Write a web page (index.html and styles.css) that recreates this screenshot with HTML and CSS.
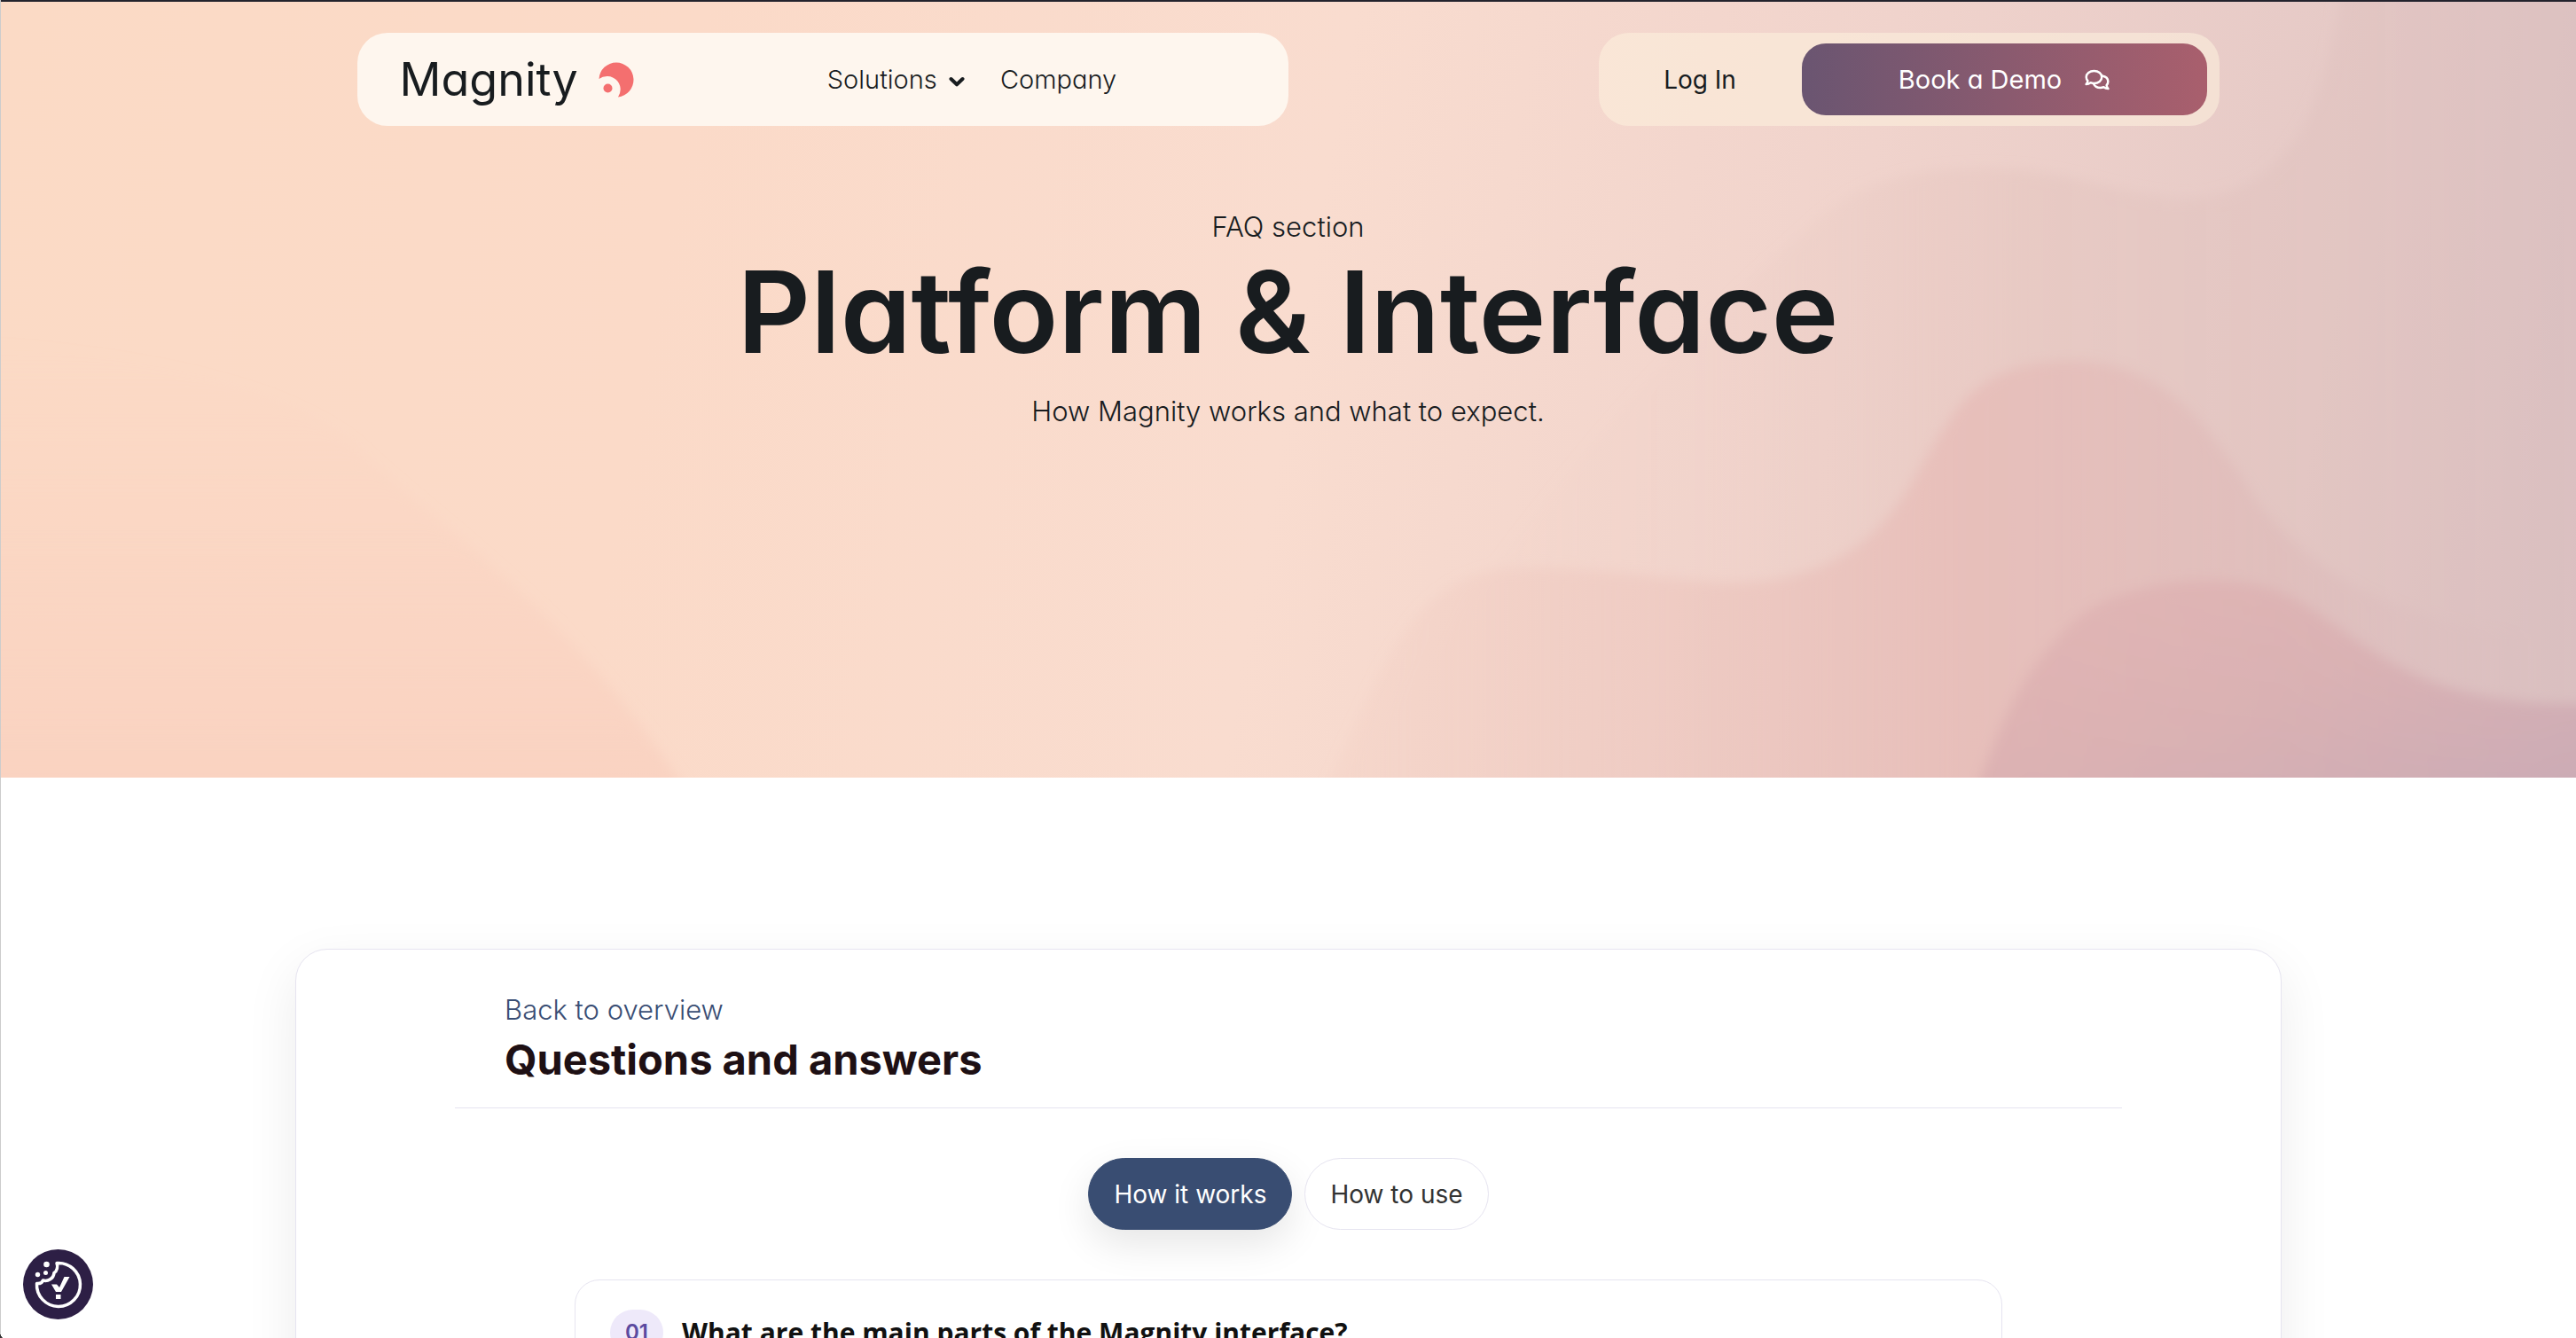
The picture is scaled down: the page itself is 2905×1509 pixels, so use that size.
FILE: index.html
```html
<!DOCTYPE html>
<html lang="en">

<head>
    <meta charset="UTF-8">
    <meta name="viewport" content="width=device-width, initial-scale=1.0">
    <title>Magnity - Platform &amp; Interface</title>
    <link rel="stylesheet" href="styles.css">
</head>

<body>
    <section class="hero">
        <!-- soft waves behind the header -->
        <svg class="waves" viewBox="0 0 2905 876" preserveAspectRatio="none" aria-hidden="true">
            <defs>
                <linearGradient id="waveA" x1="0" x2="1" y1="0" y2="0">
                    <stop offset="0" stop-color="#e8c8c0" stop-opacity="0"/>
                    <stop offset="0.3" stop-color="#e8c8c0" stop-opacity="0.1"/>
                    <stop offset="0.55" stop-color="#e4c4be" stop-opacity="0.5"/>
                    <stop offset="1" stop-color="#dabfbe" stop-opacity="0.45"/>
                </linearGradient>
                <linearGradient id="waveB" x1="0" x2="1" y1="0" y2="0">
                    <stop offset="0" stop-color="#f0c6ba" stop-opacity="0.15"/>
                    <stop offset="0.5" stop-color="#e6b7b3" stop-opacity="0.6"/>
                    <stop offset="0.75" stop-color="#dcb4b4" stop-opacity="0.4"/>
                    <stop offset="0.95" stop-color="#d4b4bb" stop-opacity="0"/>
                </linearGradient>
                <linearGradient id="waveC" x1="0" x2="1" y1="0" y2="1">
                    <stop offset="0" stop-color="#e0b0b0" stop-opacity="0.6"/>
                    <stop offset="0.5" stop-color="#d8adb0" stop-opacity="0.75"/>
                    <stop offset="1" stop-color="#c8a8b4" stop-opacity="0.9"/>
                </linearGradient>
                <linearGradient id="waveL" x1="0" x2="0" y1="0" y2="1">
                    <stop offset="0" stop-color="#f9cfbe" stop-opacity="0"/>
                    <stop offset="1" stop-color="#f9cfbe" stop-opacity="0.7"/>
                </linearGradient>
                <filter id="soft"><feGaussianBlur stdDeviation="7"/></filter>
            </defs>
            <g filter="url(#soft)">
                <path fill="url(#waveL)" d="M-20 380C120 400 300 420 400 500C500 600 640 680 780 900H-20Z"/>
                <path fill="url(#waveA)" d="M2640 -20C2625 120 2580 222 2460 222C2370 215 2330 186 2230 188C2090 190 2060 240 2000 290C1900 380 1750 520 1500 900H2930V-20Z"/>
                <path fill="url(#waveB)" d="M1490 900C1560 750 1590 650 1700 640C1800 634 1900 660 1980 655C2130 640 2150 540 2200 470C2240 410 2300 404 2350 406C2450 415 2490 480 2550 570C2640 680 2750 710 2930 720V900Z"/>
                <path fill="url(#waveC)" d="M2225 900C2260 800 2290 740 2350 690C2410 650 2530 640 2590 675C2680 730 2730 800 2930 792V900Z"/>
            </g>
        </svg>

        <header class="header">
            <div class="nav-box">
                <a class="logo" href="#">
                    <span>Magnity</span>
                    <svg width="40" height="40" viewBox="0 0 40 40" aria-hidden="true">
                        <path fill="#f46f6f" d="M.5 19A19.5 19.5 0 1 1 22 39.400A15 15 0 0 0 .5 19Z"/>
                        <circle cx="10.500" cy="29.500" r="5" fill="#f46f6f"/>
                    </svg>
                </a>
                <nav class="menu">
                    <a href="#">Solutions
                        <svg width="18" height="12" viewBox="0 0 18 12" aria-hidden="true"><path d="M2.500 3L9 9.300L15.500 3" fill="none" stroke="#181c1f" stroke-width="4" stroke-linecap="round" stroke-linejoin="round"/></svg>
                    </a>
                    <a href="#">Company</a>
                </nav>
            </div>
            <div class="action-box">
                <a class="login" href="#">Log In</a>
                <a class="demo" href="#">Book a Demo
                    <svg width="28" height="24" viewBox="0 0 28 24" fill="none" stroke="#fff" stroke-width="2.500" stroke-linejoin="round" aria-hidden="true">
                        <path d="M10.500 2C15.500 2 19.200 5 19.200 9S15.500 16 10.500 16C9 16 7.800 15.700 6.600 15.200C5.300 16.200 3.600 17 1.600 17C2.600 15.900 3.200 14.600 3.400 13.200C2.300 12 1.700 10.600 1.700 9C1.700 5 5.500 2 10.500 2Z"/>
                        <path d="M19.500 7.500C23.600 8.200 26.300 10.800 26.300 14C26.300 15.600 25.700 17 24.600 18.200C24.800 19.600 25.400 20.900 26.400 22C24.400 22 22.700 21.200 21.400 20.200C20.200 20.700 19 21 17.500 21C14.200 21 11.400 19.600 10 16.500"/>
                    </svg>
                </a>
            </div>
        </header>

        <div class="hero-text">
            <p>FAQ section</p>
            <h1>Platform &amp; Interface</h1>
            <p>How Magnity works and what to expect.</p>
        </div>
    </section>

    <main class="card">
        <div class="card-head">
            <a href="#">Back to overview</a>
            <h2>Questions and answers</h2>
        </div>
        <div class="tabs">
            <button class="tab active" type="button">How it works</button>
            <button class="tab" type="button">How to use</button>
        </div>
        <div class="question">
            <span class="num">01</span>
            <h3>What are the main parts of the Magnity interface?</h3>
        </div>
    </main>

    <button class="cookie" type="button" aria-label="Cookie settings">
        <svg width="79" height="79" viewBox="0 0 79 79" aria-hidden="true">
            <circle cx="39.500" cy="39.500" r="39.500" fill="#2d1f45"/>
            <path d="M38 15.500A24.500 24.500 0 1 1 15.500 38.500C19 39 21.500 37.500 22.500 35C28 36.500 34.500 33 35 26.500C38.500 24.500 39.500 19 38 15.500Z" fill="none" stroke="#fff" stroke-width="3.500" stroke-linejoin="round"/>
            <circle cx="26.500" cy="17" r="3.300" fill="#fff"/>
            <circle cx="16.500" cy="28.500" r="2.700" fill="#fff"/>
            <circle cx="25.500" cy="26.500" r="2.500" fill="#fff"/>
            <path d="M32 39.500H38L41 43L46.500 31H52.500L43 48H37Z" fill="#fff"/>
            <path d="M37 51H42.500V56H37Z" fill="#fff"/>
        </svg>
    </button>
</body>

</html>
```
FILE: styles.css
```css
* {
    margin: 0;
    padding: 0;
    box-sizing: border-box;
}
body {
    background: #fff;
    border-left: 1px solid #ccc;
    color: #181c1f;
    font-family: "Inter", "Liberation Sans", sans-serif;
    font-size: 31px;
    overflow-x: hidden;
}
/* dark window corner */
body::after {
    content: "";
    position: fixed;
    left: 0;
    bottom: 0;
    width: 4px;
    height: 8px;
    background: radial-gradient(ellipse at 100% 0, transparent 70%, #333 72%);
}
a {
    color: inherit;
    text-decoration: none;
}
button {
    border: none;
    font-family: inherit;
    cursor: pointer;
}

/* hero */
.hero {
    position: relative;
    margin-left: -1px;
    padding: 35px 0 389px;
    border-top: 2px solid #23232d;
    background: linear-gradient(100deg, #fbdac5 0%, #fbdac8 26%, #f9dccf 50%, #f0d3cc 70%, #e5c9c6 88%, #d8bec1 100%);
    overflow: hidden;
}
.waves {
    position: absolute;
    inset: 0;
    width: 100%;
    height: 100%;
}
.header {
    position: relative;
    display: flex;
    justify-content: space-between;
    width: 2100px;
    max-width: 90%;
    margin: 0 auto;
    font-size: 29px;
    font-weight: 300;
    font-feature-settings: "cv11";
}
.nav-box {
    display: flex;
    align-items: center;
    width: 50%;
    height: 105px;
    padding-left: 48px;
    border-radius: 34px;
    background: #fef6ee;
}
.logo {
    display: flex;
    align-items: center;
    gap: 23px;
    font-size: 52px;
    font-weight: 400;
}
.menu {
    display: flex;
    gap: 40px;
    margin-left: 218px;
}
.menu svg {
    margin-left: 5px;
    vertical-align: middle;
}
.action-box {
    display: flex;
    align-items: center;
    width: 33.333%;
    height: 105px;
    padding: 12px 14px 12px 0;
    border-radius: 34px;
    background: rgba(254, 243, 222, 0.55);
}
.login {
    flex: 1;
    text-align: center;
    font-size: 28px;
    font-weight: 400;
}
.demo {
    display: flex;
    align-items: center;
    justify-content: center;
    gap: 26px;
    width: 457px;
    height: 81px;
    border-radius: 27px;
    background: linear-gradient(90deg, #6a5571, #a95f6d);
    color: #fff;
    font-weight: 400;
}
.hero-text {
    position: relative;
    margin-top: 90px;
    text-align: center;
    font-weight: 300;
}
.hero-text p {
    line-height: 48px;
}
.hero-text h1 {
    margin-bottom: 16px;
    font-size: 128px;
    font-weight: 600;
    line-height: 144px;
    font-feature-settings: "cv11";
}

/* faq card */
.card {
    width: 2240px;
    max-width: 94%;
    margin: 193px auto 0;
    padding: 44px 179px 80px;
    border: 1px solid #e6e4f0;
    border-radius: 36px;
    background: #fff;
    box-shadow: 0 20px 60px rgba(0, 0, 0, 0.08);
}
.card-head {
    padding: 0 56px 22px;
    border-bottom: 1px solid #e6e4f0;
}
.card-head a {
    color: #3a4e74;
    font-weight: 300;
    line-height: 48px;
}
.card-head h2 {
    color: #1e1014;
    font-size: 47px;
    line-height: 64px;
}
.tabs {
    display: flex;
    justify-content: center;
    gap: 14px;
    margin-top: 56px;
}
.tab {
    height: 81px;
    padding: 0 28px;
    border: 1px solid #e6e4f0;
    border-radius: 41px;
    background: #fff;
    color: #333;
    font-size: 28px;
    font-feature-settings: "cv11";
}
.tab.active {
    border-color: #394d72;
    background: #394d72;
    color: #fff;
    box-shadow: 0 16px 44px rgba(0, 0, 0, 0.1);
}
.question {
    display: flex;
    align-items: center;
    gap: 21px;
    max-width: 1610px;
    margin: 56px auto 0;
    padding: 33px 39px;
    border: 1px solid #e6e4f0;
    border-radius: 28px;
}
.num {
    padding: 0 17px;
    border-radius: 26px;
    background: #eee9fa;
    color: #5b4a9f;
    font-size: 24px;
    font-weight: 600;
    line-height: 52px;
}
.question h3 {
    color: #111;
    font-family: "Open Sans", "Noto Sans", sans-serif;
    font-size: 30px;
    line-height: 44px;
}

/* cookie button stays in the corner */
.cookie {
    position: fixed;
    left: 26px;
    bottom: 21px;
    height: 79px;
    border-radius: 50%;
    background: none;
}
```
